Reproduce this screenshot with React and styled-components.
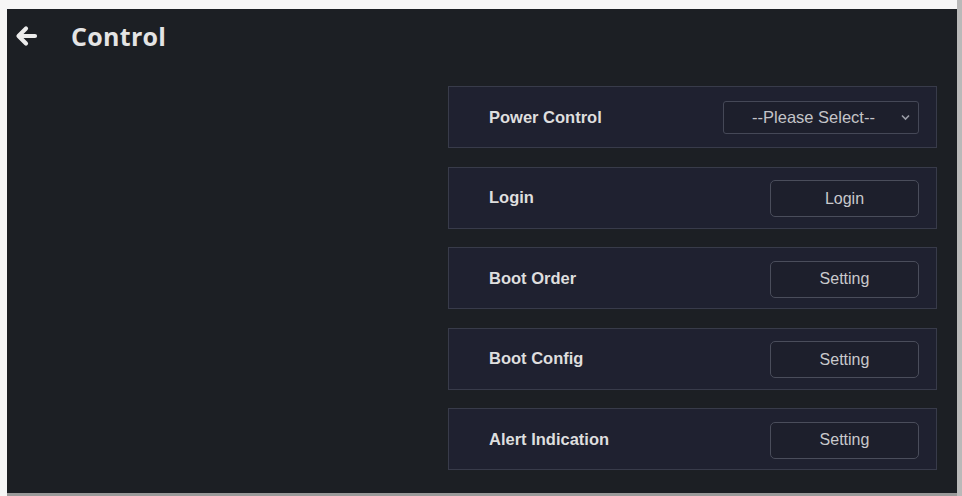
import React from "react";
import styled, { createGlobalStyle } from "styled-components";

const Global = createGlobalStyle`
  html, body { margin: 0; padding: 0; }
  body {
    background: #f6f6f6;
    font-family: "Liberation Sans", Arial, sans-serif;
  }
`;

const Page = styled.div`
  width: 962px;
  height: 496px;
  box-sizing: border-box;
  padding: 9px 5px 3px 7px;
  background: linear-gradient(to right, #f6f6f6 957px, #b9b9b9 957px);
`;

const Frame = styled.div`
  width: 950px;
  height: 484px;
  background: #1c1f24;
  box-shadow: 0 3px 0 #9a9a9a;
  display: flex;
  flex-direction: column;
`;

const Header = styled.header`
  height: 54px;
  display: flex;
  align-items: center;
  padding-left: 7px;
  gap: 33px;
`;

const BackIcon = styled.svg`
  width: 24px;
  height: 22px;
  display: block;
`;

const Title = styled.h1`
  margin: 0;
  font-family: "Open Sans", "Noto Sans", sans-serif;
  font-weight: 700;
  font-size: 25px;
  letter-spacing: 0.3px;
  color: #e4e4e4;
`;

const Content = styled.main`
  display: flex;
  justify-content: flex-end;
  padding: 23px 20px 0 0;
`;

const List = styled.div`
  width: 489px;
  display: flex;
  flex-direction: column;
  gap: 18.5px;
`;

const Row = styled.section`
  height: 62px;
  box-sizing: border-box;
  border: 1px solid #383b4a;
  background: #1f2130;
  display: flex;
  align-items: center;
  justify-content: space-between;
  padding: 0 17px 0 40px;
`;

const Label = styled.span`
  font-weight: 700;
  font-size: 16.5px;
  color: #dedede;
`;

const ActionButton = styled.button`
  width: 149px;
  height: 37px;
  box-sizing: border-box;
  border: 1px solid #4a4d5b;
  border-radius: 5px;
  background: #1d1f2c;
  color: #c9c9cc;
  font-family: "Liberation Sans", Arial, sans-serif;
  font-size: 16px;
  margin-top: 2px;
`;

const Select = styled.div`
  width: 196px;
  height: 33px;
  box-sizing: border-box;
  border: 1px solid #454857;
  border-radius: 3px;
  background: #1d1f2c;
  display: flex;
  align-items: center;
  padding: 0 8px 0 16px;
  color: #c4c4c8;
  font-size: 16.5px;
`;

const SelectText = styled.span`
  flex: 1;
  text-align: center;
`;

const Chevron = styled.svg`
  width: 9px;
  height: 7px;
  margin-left: 14px;
`;

const rows = [
  { label: "Login", action: "Login" },
  { label: "Boot Order", action: "Setting" },
  { label: "Boot Config", action: "Setting" },
  { label: "Alert Indication", action: "Setting" },
];

export default function App() {
  return (
    <>
      <Global />
      <Page>
        <Frame>
          <Header>
            <BackIcon viewBox="0 0 24 22" fill="none">
              <path
                d="M21 11H5M12 3.5L4.5 11L12 18.5"
                stroke="#ececec"
                strokeWidth="4.2"
                strokeLinecap="round"
                strokeLinejoin="round"
              />
            </BackIcon>
            <Title>Control</Title>
          </Header>
          <Content>
            <List>
              <Row>
                <Label>Power Control</Label>
                <Select>
                  <SelectText>--Please Select--</SelectText>
                  <Chevron viewBox="0 0 9 7" fill="none">
                    <path d="M1 1.5L4.5 5L8 1.5" stroke="#9a9ca6" strokeWidth="1.6" />
                  </Chevron>
                </Select>
              </Row>
              {rows.map((r) => (
                <Row key={r.label}>
                  <Label>{r.label}</Label>
                  <ActionButton>{r.action}</ActionButton>
                </Row>
              ))}
            </List>
          </Content>
        </Frame>
      </Page>
    </>
  );
}
